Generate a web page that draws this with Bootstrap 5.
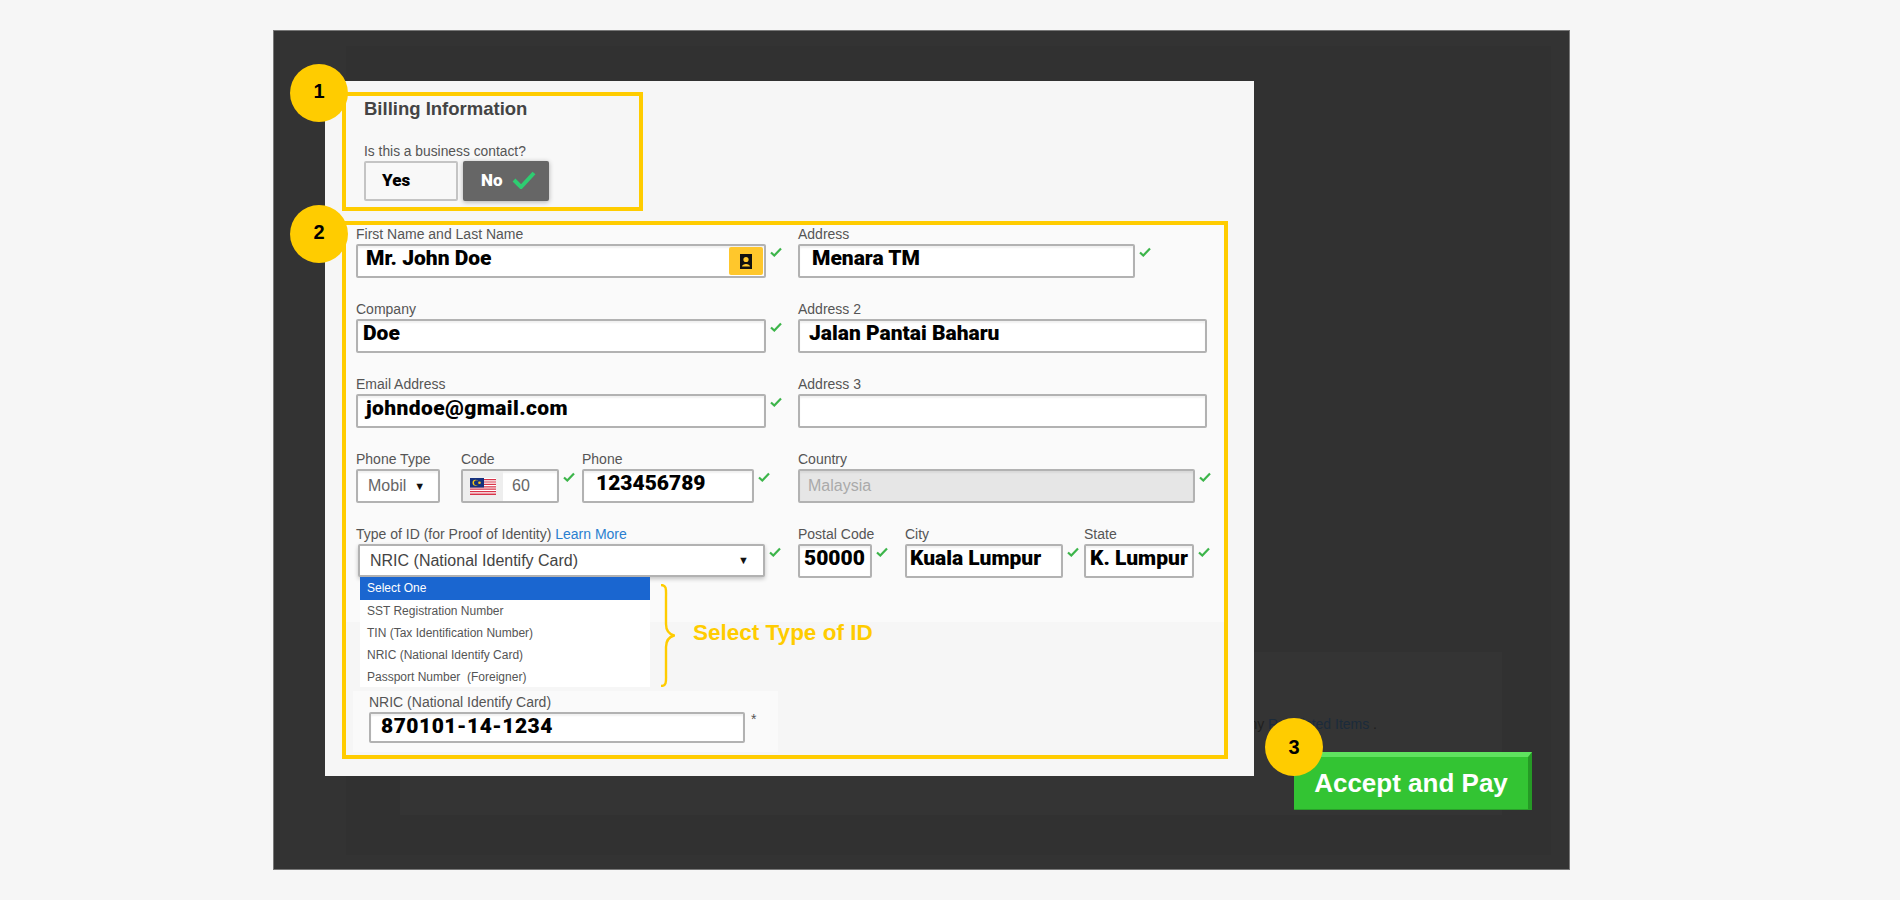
<!DOCTYPE html>
<html lang="en">
<head>
<meta charset="UTF-8">
<title>Billing Information</title>
<link href="https://cdn.jsdelivr.net/npm/bootstrap@5.3.2/dist/css/bootstrap.min.css" rel="stylesheet">
<style>
    body { background: #f6f6f6; font-family: "Liberation Sans", Arial, sans-serif; width: 1900px; height: 900px; overflow: hidden; }
    .stage { position: relative; margin: 30px 0 0 273px; width: 1297px; height: 840px; background: #333; border: 1px solid #777; }
    .dim-wrap { margin: 15px 0 0 72px; width: 1205px; height: 809px; background: #313131; padding: 606px 0 0 54px; }
    .dim-panel { width: 1102px; height: 163px; background: #343434; padding-top: 62px; }
    .dim-line { margin-right: 125px; font-size: 14px; line-height: 20px; color: #1f1f1f; }
    .dim-line a { color: #1b2b3b; text-decoration: none; }
    .pay-btn { margin: 18px -30px 0 0; width: 238px; height: 58px; background: #33c433; border: 0; border-top: 5px solid #5fe35f; border-right: 4px solid #259a25; border-bottom: 1px solid #2a9f2a; color: #fff; font-weight: 700; font-size: 26px; line-height: 46px; padding: 0; text-align: center; border-radius: 0; }

    .dlg { position: absolute; left: 51px; top: 50px; width: 929px; height: 695px; background: #f6f6f6; padding: 11px 0 0 17px; z-index: 2; }
    .mark-box { border: 4px solid #ffcc00; }
    .box-bill { width: 301px; height: 119px; padding-left: 18px; background: linear-gradient(90deg, #f8f8f8 80%, #f6f6f6 80%); }
    .bill-title { font-size: 18.5px; font-weight: 700; color: #444; line-height: 24px; margin: 1px 0 22px; }
    .bill-q { font-size: 13.8px; line-height: 17px; color: #555; margin-bottom: 1px; }
    .tog { height: 40px; border-radius: 2px; font-family: Roboto, sans-serif; font-weight: 900; font-size: 17px; line-height: 35px; }
    .tog-yes { width: 94px; background: #f8f8f8; border: 2px solid #c4c4c4; color: #000; padding-left: 16px; }
    .tog-no { width: 86px; margin-left: 5px; background: #666; color: #fff; padding-left: 18px; line-height: 39px; box-shadow: 0 1px 5px rgba(0,0,0,.3); }
    .tog-no svg { width: 24px; height: 18px; margin-left: 9px; vertical-align: -3px; }

    .box-form { margin-top: 10px; width: 886px; height: 538px; padding: 1px 0 0 10px; background: linear-gradient(180deg, #fafafa 397px, #f6f6f6 397px); }
    .col-l { width: 442px; }
    .col-r { width: 420px; }
    .rows { gap: 23px; }
    .lbl { display: block; font-size: 14px; line-height: 17px; height: 17px; margin: 0 0 1px; color: #555; white-space: nowrap; }
    .lbl a { color: #2a7fd0; text-decoration: none; }
    .ti { display: flex; align-items: center; height: 34px; padding: 0 0 4px; border: 2px solid #b2b2b2; border-radius: 2px; background: #fff; font-family: Roboto, sans-serif; font-weight: 900; font-size: 21px; color: #000; white-space: nowrap; box-shadow: inset 0 2px 2px rgba(0,0,0,.06); flex: none; }
    .ti-plain { padding-bottom: 0; font-family: "Liberation Sans", Arial, sans-serif; font-weight: 400; font-size: 16px; color: #666; }
    .ok { width: 12px; height: 10px; margin: 3px 0 0 4px; flex: none; }

    .w-name { width: 410px; padding-left: 8px; padding-bottom: 0; }
    .w-name b { font-weight: 900; margin-bottom: 4px; }
    .w-ad1 { width: 337px; padding-left: 12px; }
    .w-ad2 { width: 409px; padding-left: 9px; }
    .w-ctry { width: 397px; padding-left: 8px; background: #e6e6e6; color: #aaa; }
    .w-comp { width: 410px; padding-left: 5px; }
    .w-mail { width: 410px; padding-left: 8px; letter-spacing: .4px; }
    .w-mob { width: 84px; padding-left: 10px; margin-right: 21px; }
    .w-code { width: 98px; overflow: hidden; }
    .w-ph { width: 172px; padding-left: 12px; }
    .w-zip { width: 74px; padding-left: 4px; }
    .w-city { width: 158px; padding-left: 3px; }
    .w-st { width: 110px; padding-left: 4px; }
    .cell-city { margin-left: 17px; }
    .cell-st { margin-left: 5px; }
    .cell-ph { margin-left: 7px; }
    .caret-d { font-size: 11px; color: #111; margin-left: 8px; }
    .yel-btn { margin-left: auto; margin-right: 1px; width: 34px; height: 28px; background: #ffc72c; border-radius: 2px; }
    .yel-btn svg { width: 12px; height: 15px; }
    .flag-cell { width: 40px; height: 30px; background: #eee; flex: none; margin-right: 9px; }
    .flag-cell svg { width: 26px; height: 17px; }

    .sel-wrap { margin-left: 2px; }
    .w-sel { width: 407px; height: 33px; padding: 0 14px 0 10px; color: #444; box-shadow: 0 2px 4px rgba(0,0,0,.22); }
    .pick-row { margin-left: 4px; height: 111px; white-space: nowrap; }
    .pick-list { width: 290px; height: 110px; flex: none; background: #fff; font-size: 12px; color: #555; }
    .pick-list div { height: 22px; line-height: 22px; padding-left: 7px; }
    .pick-list .on { height: 23px; line-height: 23px; background: #1a66d0; color: #fff; }
    .brace { width: 15px; height: 103px; margin: 7px 0 0 10px; flex: none; }
    .pick-tip { margin: 42px 0 0 18px; font-size: 22.5px; line-height: 28px; font-weight: 700; color: #ffcc00; }
    .nric-area { margin: 3px 0 0 -3px; width: 425px; height: 61px; background: #fafafa; padding: 3px 0 0 16px; }
    .nric-area .ti { width: 376px; height: 31px; padding-left: 10px; padding-bottom: 2px; letter-spacing: .5px; }
    .nric-area .lbl { margin-bottom: 0; height: 18px; }
    .star { font-size: 14px; color: #555; margin-left: 6px; line-height: 14px; }

    .num { position: absolute; z-index: 3; left: 16px; width: 58px; height: 58px; border-radius: 50%; background: #ffcc00; color: #000; font-weight: 700; font-size: 20px; display: flex; align-items: center; justify-content: center; padding-bottom: 4px; }
    .num-1 { top: 33px; }
    .num-2 { top: 174px; }
    .num-3 { top: 687px; left: 991px; padding-bottom: 0; }
</style>
</head>
<body>
<svg width="0" height="0" class="position-absolute">
    <symbol id="ok" viewBox="0 0 12 10"><path d="M1 5.5 L4.3 8.5 L11 1.5" fill="none" stroke="#3cb54a" stroke-width="2.2"/></symbol>
</svg>

<div class="stage">
    <div class="dim-wrap">
        <div class="dim-panel d-flex flex-column align-items-end">
            <div class="dim-line">Please review any <a href="#">Restricted Items</a> .</div>
            <button type="button" class="btn pay-btn">Accept and Pay</button>
        </div>
    </div>

    <div class="num num-1">1</div>
    <div class="num num-2">2</div>
    <div class="num num-3">3</div>

    <div class="dlg">
        <div class="mark-box box-bill">
            <div class="bill-title">Billing Information</div>
            <p class="bill-q">Is this a business contact?</p>
            <div class="d-flex">
                <div class="tog tog-yes">Yes</div>
                <div class="tog tog-no">No<svg viewBox="0 0 24 18"><path d="M2 9 L9 16 L22 2" fill="none" stroke="#2ecc71" stroke-width="4"/></svg></div>
            </div>
        </div>

        <div class="mark-box box-form d-flex">
            <div class="col-l d-flex flex-column rows">
                <div>
                    <label class="lbl">First Name and Last Name</label>
                    <div class="d-flex">
                        <div class="form-control ti w-name"><b>Mr. John Doe</b>
                            <span class="yel-btn d-flex align-items-center justify-content-center">
                                <svg viewBox="0 0 12 15"><rect width="12" height="15" fill="#111"/><circle cx="6" cy="5.5" r="2.6" fill="#ffc72c"/><path d="M2 12.5 C2 9 10 9 10 12.5 Z" fill="#ffc72c"/></svg>
                            </span>
                        </div>
                        <svg class="ok"><use href="#ok"/></svg>
                    </div>
                </div>
                <div>
                    <label class="lbl">Company</label>
                    <div class="d-flex"><div class="form-control ti w-comp">Doe</div><svg class="ok"><use href="#ok"/></svg></div>
                </div>
                <div>
                    <label class="lbl">Email Address</label>
                    <div class="d-flex"><div class="form-control ti w-mail">johndoe@gmail.com</div><svg class="ok"><use href="#ok"/></svg></div>
                </div>
                <div class="d-flex">
                    <div>
                        <label class="lbl">Phone Type</label>
                        <div class="form-control ti ti-plain w-mob">Mobil <span class="caret-d">▼</span></div>
                    </div>
                    <div>
                        <label class="lbl">Code</label>
                        <div class="d-flex">
                            <div class="form-control ti ti-plain w-code">
                                <span class="flag-cell d-flex align-items-center justify-content-center">
                                    <svg viewBox="0 0 26 17">
                                        <rect width="26" height="17" fill="#fff"/>
                                        <path d="M0 1h26v1.2H0zM0 3.4h26v1.2H0zM0 5.8h26v1.2H0zM0 8.2h26v1.2H0zM0 10.6h26v1.2H0zM0 13h26v1.2H0zM0 15.4h26v1.6H0z" fill="#d8344a"/>
                                        <rect width="14" height="9.5" fill="#14307e"/>
                                        <circle cx="5.5" cy="4.8" r="3" fill="#f5c518"/>
                                        <circle cx="6.5" cy="4.8" r="2.5" fill="#14307e"/>
                                        <circle cx="9.5" cy="4.8" r="1.3" fill="#f5c518"/>
                                    </svg>
                                </span>60</div>
                            <svg class="ok"><use href="#ok"/></svg>
                        </div>
                    </div>
                    <div class="cell-ph">
                        <label class="lbl">Phone</label>
                        <div class="d-flex"><div class="form-control ti w-ph">123456789</div><svg class="ok"><use href="#ok"/></svg></div>
                    </div>
                </div>
                <div>
                    <label class="lbl">Type of ID (for Proof of Identity) <a href="#">Learn More</a></label>
                    <div class="d-flex sel-wrap">
                        <div class="form-control ti ti-plain w-sel justify-content-between">NRIC (National Identify Card) <span class="caret-d">▼</span></div>
                        <svg class="ok"><use href="#ok"/></svg>
                    </div>
                    <div class="pick-row d-flex">
                        <div class="pick-list">
                            <div class="on">Select One</div>
                            <div>SST Registration Number</div>
                            <div>TIN (Tax Identification Number)</div>
                            <div>NRIC (National Identify Card)</div>
                            <div>Passport Number&nbsp; (Foreigner)</div>
                        </div>
                        <svg class="brace" viewBox="0 0 15 103"><path d="M1 1 C7 1 6 6 6 14 V40 C6 47 9 50 14 51.5 C9 53 6 56 6 63 V89 C6 97 7 102 1 102" fill="none" stroke="#ffcc00" stroke-width="2.4"/></svg>
                        <div class="pick-tip">Select Type of ID</div>
                    </div>
                    <div class="nric-area">
                        <label class="lbl">NRIC (National Identify Card)</label>
                        <div class="d-flex"><div class="form-control ti">870101-14-1234</div><span class="star">*</span></div>
                    </div>
                </div>
            </div>

            <div class="col-r d-flex flex-column rows">
                <div>
                    <label class="lbl">Address</label>
                    <div class="d-flex"><div class="form-control ti w-ad1">Menara TM</div><svg class="ok"><use href="#ok"/></svg></div>
                </div>
                <div>
                    <label class="lbl">Address 2</label>
                    <div class="form-control ti w-ad2">Jalan Pantai Baharu</div>
                </div>
                <div>
                    <label class="lbl">Address 3</label>
                    <div class="form-control ti w-ad2"></div>
                </div>
                <div>
                    <label class="lbl">Country</label>
                    <div class="d-flex"><div class="form-control ti ti-plain w-ctry">Malaysia</div><svg class="ok"><use href="#ok"/></svg></div>
                </div>
                <div class="d-flex">
                    <div>
                        <label class="lbl">Postal Code</label>
                        <div class="d-flex"><div class="form-control ti w-zip">50000</div><svg class="ok"><use href="#ok"/></svg></div>
                    </div>
                    <div class="cell-city">
                        <label class="lbl">City</label>
                        <div class="d-flex"><div class="form-control ti w-city">Kuala Lumpur</div><svg class="ok"><use href="#ok"/></svg></div>
                    </div>
                    <div class="cell-st">
                        <label class="lbl">State</label>
                        <div class="d-flex"><div class="form-control ti w-st">K. Lumpur</div><svg class="ok"><use href="#ok"/></svg></div>
                    </div>
                </div>
            </div>
        </div>
    </div>
</div>
<script src="https://cdn.jsdelivr.net/npm/bootstrap@5.3.2/dist/js/bootstrap.bundle.min.js"></script>
</body>
</html>
